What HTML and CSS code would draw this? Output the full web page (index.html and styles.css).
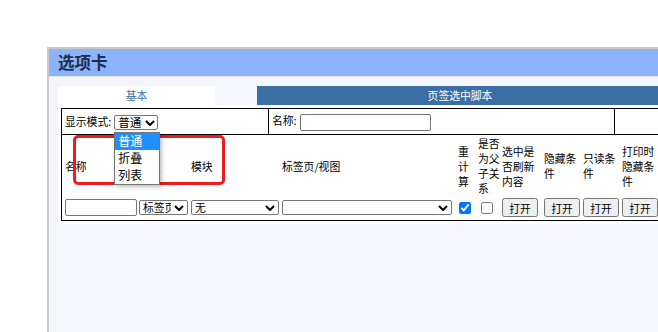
FILE: index.html
```html
<!DOCTYPE html>
<html lang="zh-CN">
<head>
    <meta charset="UTF-8">
    <title>选项卡</title>
    <link rel="stylesheet" href="styles.css">
</head>
<body>

<div class="panel">
    <div class="panel-title">选项卡</div>

    <div class="tabs">
        <div class="tab tab-basic">基本</div>
        <div class="tab tab-script">页签选中脚本</div>
    </div>

    <div class="tab-body">
        <table class="grid">
            <tr class="grid-top">
                <td class="mode-cell">
                    显示模式:<span class="mode-wrap"><select class="mode-select">
                        <option>普通</option>
                        <option>折叠</option>
                        <option>列表</option>
                    </select><svg class="caret" viewBox="0 0 10 6"><path d="M1 1l4 4 4-4"/></svg><ul class="mode-list">
                        <li class="picked">普通</li>
                        <li>折叠</li>
                        <li>列表</li>
                    </ul></span>
                </td>
                <td class="name-cell">名称:<input type="text" class="name-input"></td>
                <td class="blank-cell"></td>
            </tr>
            <tr>
                <td colspan="3" class="fields-cell">
                    <table class="fields">
                        <colgroup>
                            <col class="c-name">
                            <col class="c-type">
                            <col class="c-module">
                            <col class="c-view">
                            <col class="c-calc">
                            <col class="c-parent">
                            <col class="c-wide">
                            <col class="c-cond">
                            <col class="c-cond">
                            <col class="c-cond">
                        </colgroup>
                        <tr class="fields-head">
                            <th>名称</th>
                            <th>类型</th>
                            <th>模块</th>
                            <th>标签页/视图</th>
                            <th>重计算</th>
                            <th>是否为父子关系</th>
                            <th>选中是否刷新内容</th>
                            <th>隐藏条件</th>
                            <th>只读条件</th>
                            <th>打印时隐藏条件</th>
                        </tr>
                        <tr class="fields-row">
                            <td><input type="text" class="f-input"></td>
                            <td>
                                <span class="sel-wrap">
                                    <select class="f-select sel-type"><option>标签页</option></select>
                                    <svg class="caret" viewBox="0 0 10 6"><path d="M1 1l4 4 4-4"/></svg>
                                </span>
                            </td>
                            <td>
                                <span class="sel-wrap">
                                    <select class="f-select sel-module"><option>无</option></select>
                                    <svg class="caret" viewBox="0 0 10 6"><path d="M1 1l4 4 4-4"/></svg>
                                </span>
                            </td>
                            <td>
                                <span class="sel-wrap">
                                    <select class="f-select sel-view"><option></option></select>
                                    <svg class="caret" viewBox="0 0 10 6"><path d="M1 1l4 4 4-4"/></svg>
                                </span>
                            </td>
                            <td><input type="checkbox" class="chk chk-calc" checked></td>
                            <td><input type="checkbox" class="chk chk-parent"></td>
                            <td><button class="open-btn">打开</button></td>
                            <td><button class="open-btn">打开</button></td>
                            <td><button class="open-btn">打开</button></td>
                            <td><button class="open-btn">打开</button></td>
                        </tr>
                    </table>
                </td>
            </tr>
        </table>

        <div class="mark"></div>
    </div>
</div>

</body>
</html>
```

FILE: styles.css
```css
html, body {
    margin: 0;
    padding: 0;
    height: 332px;
    overflow: hidden;
}
body {
    background-color: #ffffff;
    font-family: "Noto Sans CJK SC", "Noto Sans", sans-serif;
    font-size: 10.8px;
    color: #000;
}
.panel {
    margin: 47px 0 0 47px;
    width: 640px;
    height: 285px;
    border-left: 2px solid #c9c9c9;
    border-top: 2px solid #c9c9c9;
    background-color: #f5f6fb;
    overflow: hidden;
}
.panel-title {
    height: 27px;
    line-height: 27px;
    padding-left: 9px;
    background-color: #8db4fa;
    color: #1c2e4e;
    font-size: 16.5px;
    font-weight: bold;
    border-bottom: 1px solid #e6e9da;
}
.tabs {
    display: flex;
    margin-top: 9px;
    padding-left: 9px;
    height: 19px;
}
.tab {
    width: 157px;
    line-height: 19px;
    text-align: center;
    flex-shrink: 0;
}
.tab-basic {
    background-color: #ffffff;
    color: #3a6ea5;
}
.tab-script {
    margin-left: 42px;
    width: 406px;
    background-color: #3a6ea5;
    color: #ffffff;
}
.tab-body {
    position: relative;
    margin-left: 9px;
    width: 620px;
    padding: 3px;
    background-color: #ffffff;
}

/* outer grid */
.grid {
    border-collapse: collapse;
    border: 1px solid #000;
    table-layout: fixed;
    width: 620px;
}
.grid-top td {
    border: 1px solid #000;
    height: 25px;
    padding: 0 3px;
    white-space: nowrap;
}
.mode-cell {
    width: 200px;
}
.name-cell {
    width: 339px;
}

/* select look-alike: plain box + chevron */
.caret {
    position: absolute;
    width: 10px;
    height: 6px;
    right: 4px;
    top: 5px;
    pointer-events: none;
}
.caret path {
    fill: none;
    stroke: #000;
    stroke-width: 2;
}
.mode-wrap {
    position: relative;
    display: inline-block;
    vertical-align: middle;
    margin-left: 3px;
}
.mode-select {
    display: block;
    width: 44px;
    height: 15px;
    box-sizing: border-box;
    padding: 0 14px 0 3px;
    margin: 0;
    appearance: none;
    background-color: #fff;
    border: 1px solid #767676;
    border-radius: 2px;
    font: inherit;
    font-size: 11.5px;
    line-height: 13px;
    color: #000;
}
.mode-wrap .caret {
    right: 3px;
}
.mode-list {
    position: absolute;
    top: 17px;
    left: 0;
    width: 46px;
    box-sizing: border-box;
    margin: 0;
    padding: 0;
    list-style: none;
    background-color: #fff;
    border: 1px solid #767676;
    box-shadow: 2px 2px 4px rgba(0, 0, 0, 0.25);
    font-size: 12px;
    z-index: 2;
}
.mode-list li {
    height: 17px;
    line-height: 15px;
    padding-left: 3px;
}
.mode-list li.picked {
    background-color: #1e90ff;
    color: #fff;
}
.name-input {
    width: 131px;
    height: 17px;
    box-sizing: border-box;
    margin-left: 3px;
    vertical-align: middle;
    border: 1px solid #767676;
    border-radius: 2px;
}

/* field rows */
.fields-cell {
    padding: 0 0 0 3px;
}
.fields {
    border-collapse: collapse;
    table-layout: fixed;
    width: 596px;
}
.c-name { width: 74px; }
.c-type { width: 52px; }
.c-module { width: 91px; }
.c-view { width: 176px; }
.c-calc { width: 20px; }
.c-parent { width: 24px; }
.c-wide { width: 42px; }
.c-cond { width: 39px; }

.fields th {
    font-weight: normal;
    text-align: left;
    vertical-align: middle;
    padding: 0;
    line-height: 15px;
    height: 62px;
}
.fields-row td {
    padding: 1px 0 3px;
    height: 19px;
    vertical-align: middle;
    white-space: nowrap;
}
.f-input {
    display: block;
    width: 72px;
    height: 17px;
    box-sizing: border-box;
    margin: 0;
    border: 1px solid #767676;
    border-radius: 2px;
}
.sel-wrap {
    position: relative;
    display: block;
    width: max-content;
}
.f-select {
    display: block;
    height: 15px;
    box-sizing: border-box;
    margin: 0;
    padding: 0 16px 0 3px;
    appearance: none;
    background-color: #fff;
    border: 1px solid #767676;
    border-radius: 2px;
    font: inherit;
    line-height: 13px;
    color: #000;
}
.sel-type {
    width: 49px;
}
.sel-module {
    width: 88px;
}
.sel-view {
    width: 170px;
}
.chk {
    display: block;
    width: 12px;
    height: 12px;
    margin: 0;
}
.chk-calc {
    margin-left: 1px;
}
.chk-parent {
    margin-left: 3px;
}
.open-btn {
    display: block;
    width: 36px;
    height: 19px;
    padding: 0;
    margin: 0;
    font: inherit;
}

/* red highlight frame */
.mark {
    position: absolute;
    left: 15px;
    top: 30px;
    width: 152px;
    height: 50px;
    box-sizing: border-box;
    border: 3px solid #f21b1b;
    border-radius: 5px;
    z-index: 1;
}
```
